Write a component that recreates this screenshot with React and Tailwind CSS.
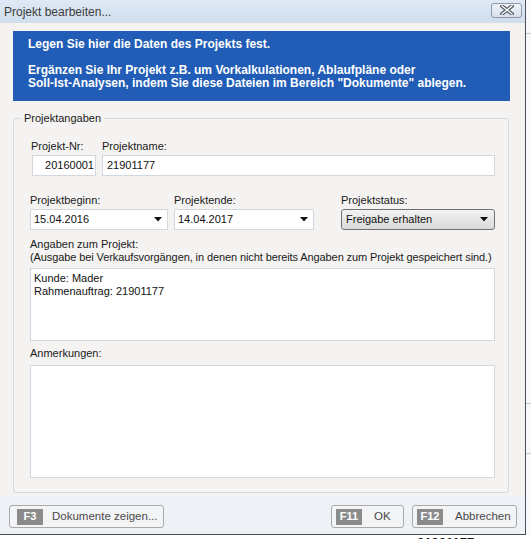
import React from 'react';

function CloseGlyph() {
  return (
    <svg width="14" height="10" viewBox="0 0 14 10">
      <path d="M2 1 L12 9 M12 1 L2 9" stroke="#4f5661" strokeWidth="3.6" strokeLinecap="square" />
      <path d="M2 1 L12 9 M12 1 L2 9" stroke="#ffffff" strokeWidth="1.4" strokeLinecap="square" />
    </svg>
  );
}

function Caret() {
  return (
    <svg width="8" height="5" viewBox="0 0 8 5" className="flex-shrink-0">
      <path d="M0 0 H8 L4 4.5 Z" fill="#111" />
    </svg>
  );
}

const Label = ({ children, className = '' }) => (
  <div className={`leading-[13px] text-[#1a1a1a] ${className}`}>{children}</div>
);

function DateField({ value, width }) {
  return (
    <div className={`${width} h-[21px] mt-[2px] bg-white border border-[#d3d8e0] flex items-center pl-[3px] pr-[5px]`}>
      <span className="flex-1">{value}</span>
      <Caret />
    </div>
  );
}

function FButton({ keyName, label, className }) {
  return (
    <button className={`h-[23px] border border-[#a9a9a9] rounded-[3px] bg-[#f3f4f6] flex items-center ${className}`}>
      <span className="w-[26px] h-[16px] bg-[#8b8b8b] text-white font-bold flex items-center justify-center text-[11px]">
        {keyName}
      </span>
      <span className="text-[#4a4a4a] text-[11.5px]">{label}</span>
    </button>
  );
}

export default function App() {
  return (
    <div className="w-[531px] h-[539px] bg-white flex flex-col overflow-hidden font-['Liberation_Sans',Arial,sans-serif] text-[11px] text-[#111]">
      <div className="flex h-[535px] flex-shrink-0">
        {/* dialog window */}
        <div className="w-[526px] flex flex-col bg-[#f4f3f1] border-r border-b border-[#4b4f57]">
          {/* title bar */}
          <div className="h-[23px] flex-shrink-0 bg-gradient-to-b from-[#dfe9f5] to-[#cfdded] flex items-center pl-[4px] pr-[3px]">
            <span className="flex-1 text-[12px] text-[#3c3c3c]">Projekt bearbeiten...</span>
            <div className="w-[31px] h-[15px] mb-[3px] rounded-[3px] border border-[#8d99a8] bg-gradient-to-b from-[#eef3f9] to-[#d7e1ed] flex items-center justify-center">
              <CloseGlyph />
            </div>
          </div>

          {/* body */}
          <div className="flex-1 flex flex-col pl-[13px]">
            <div className="w-[497px] h-[70px] mt-[8px] bg-[#215db6] text-white font-bold text-[12px] leading-[13px] pl-[15px] pt-[7px]">
              <p>Legen Sie hier die Daten des Projekts fest.</p>
              <p className="mt-[13px]">Ergänzen Sie Ihr Projekt z.B. um Vorkalkulationen, Ablaufpläne oder</p>
              <p>Soll-Ist-Analysen, indem Sie diese Dateien im Bereich "Dokumente" ablegen.</p>
            </div>

            {/* Projektangaben group */}
            <div className="relative w-[496px] h-[375px] mt-[17px] border border-[#d9d9d9] rounded-[3px] pl-[16px] pr-[13px] pt-[21px]">
              <span className="absolute left-[7px] top-[-7px] bg-[#f4f3f1] px-[3px] leading-[13px] text-[#1a1a1a]">
                Projektangaben
              </span>

              <div className="flex gap-[6px]">
                <div className="w-[66px]">
                  <Label className="pl-[1px]">Projekt-Nr:</Label>
                  <div className="ml-[2px] w-[64px] h-[21px] mt-[2px] bg-white border border-[#d3d8e0] flex items-center justify-end pr-[1px]">
                    20160001
                  </div>
                </div>
                <div className="flex-1">
                  <Label>Projektname:</Label>
                  <div className="h-[21px] mt-[2px] bg-white border border-[#d3d8e0] flex items-center pl-[4px]">
                    21901177
                  </div>
                </div>
              </div>

              <div className="flex mt-[18px]">
                <div className="w-[144px]">
                  <Label>Projektbeginn:</Label>
                  <DateField value="15.04.2016" width="w-[138px]" />
                </div>
                <div className="w-[167px]">
                  <Label>Projektende:</Label>
                  <DateField value="14.04.2017" width="w-[140px]" />
                </div>
                <div className="w-[154px]">
                  <Label>Projektstatus:</Label>
                  <div className="h-[21px] mt-[2px] rounded-[3px] border border-[#707070] bg-gradient-to-b from-[#f3f3f3] to-[#dadada] flex items-center pl-[4px] pr-[6px]">
                    <span className="flex-1">Freigabe erhalten</span>
                    <Caret />
                  </div>
                </div>
              </div>

              <Label className="mt-[8px]">Angaben zum Projekt:</Label>
              <Label className="tracking-[-0.1px] whitespace-nowrap">
                (Ausgabe bei Verkaufsvorgängen, in denen nicht bereits Angaben zum Projekt gespeichert sind.)
              </Label>
              <div className="mt-[4px] h-[73px] bg-white border border-[#d3d8e0] pl-[3px] pt-[3px] leading-[13px]">
                <p>Kunde: Mader</p>
                <p>Rahmenauftrag: 21901177</p>
              </div>

              <Label className="mt-[6px]">Anmerkungen:</Label>
              <div className="mt-[5px] h-[113px] bg-white border border-[#d3d8e0]" />
            </div>
          </div>

          {/* footer buttons */}
          <div className="h-[38px] flex-shrink-0 bg-[#eef1f6] flex items-start pt-[9px] pl-[9px]">
            <FButton keyName="F3" label="Dokumente zeigen..." className="w-[155px] pl-[7px] gap-[9px]" />
            <FButton keyName="F11" label="OK" className="w-[73px] ml-[167px] pl-[4px] gap-[12px]" />
            <FButton keyName="F12" label="Abbrechen" className="w-[105px] ml-[8px] pl-[4px] gap-[12px]" />
          </div>
        </div>

        {/* sliver of the window behind */}
        <div className="flex-1 bg-[#f8f9fc] flex flex-col">
          <div className="h-[33px]" />
          <div className="h-px bg-[#c8ccd4]" />
          <div className="h-[369px]" />
          <div className="h-px bg-[#c8ccd4]" />
          <div className="h-[49px]" />
          <div className="h-px bg-[#c8ccd4]" />
        </div>
      </div>
      <div className="h-[4px] overflow-hidden pl-[417px]">
        <div className="font-bold text-[13px] leading-[13px] mt-[1px]">21901177</div>
      </div>
    </div>
  );
}
